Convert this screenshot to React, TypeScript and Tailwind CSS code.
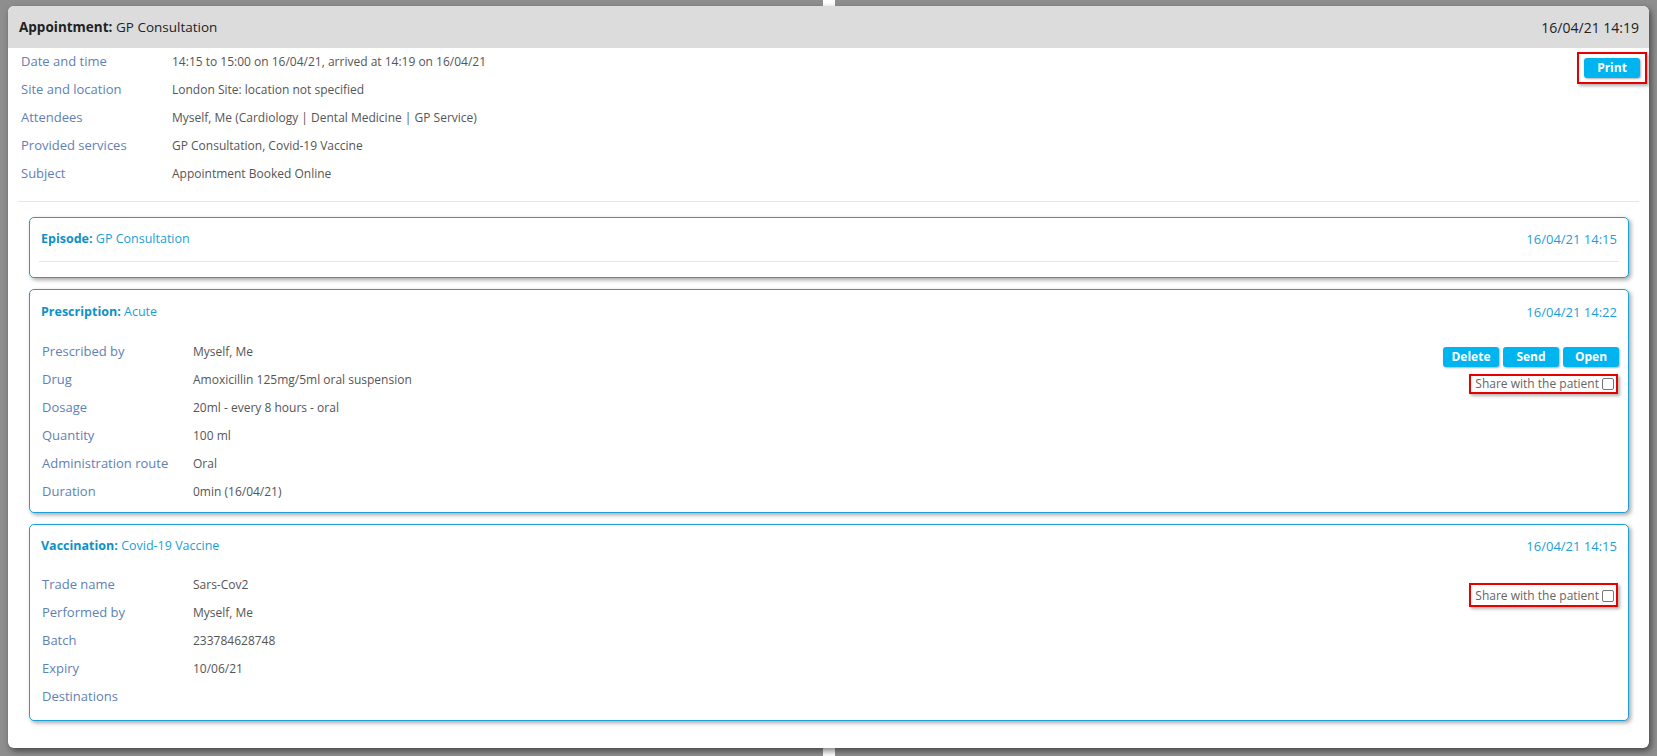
import type { ReactNode } from 'react';

type Row = { label: string; value?: string };

const appointmentRows: Row[] = [
  { label: 'Date and time', value: '14:15 to 15:00 on 16/04/21, arrived at 14:19 on 16/04/21' },
  { label: 'Site and location', value: 'London Site: location not specified' },
  { label: 'Attendees', value: 'Myself, Me (Cardiology | Dental Medicine | GP Service)' },
  { label: 'Provided services', value: 'GP Consultation, Covid-19 Vaccine' },
  { label: 'Subject', value: 'Appointment Booked Online' },
];

const prescriptionRows: Row[] = [
  { label: 'Prescribed by', value: 'Myself, Me' },
  { label: 'Drug', value: 'Amoxicillin 125mg/5ml oral suspension' },
  { label: 'Dosage', value: '20ml - every 8 hours - oral' },
  { label: 'Quantity', value: '100 ml' },
  { label: 'Administration route', value: 'Oral' },
  { label: 'Duration', value: '0min (16/04/21)' },
];

const vaccinationRows: Row[] = [
  { label: 'Trade name', value: 'Sars-Cov2' },
  { label: 'Performed by', value: 'Myself, Me' },
  { label: 'Batch', value: '233784628748' },
  { label: 'Expiry', value: '10/06/21' },
  { label: 'Destinations' },
];

function DetailRows({ rows }: { rows: Row[] }) {
  return (
    <div>
      {rows.map((row) => (
        <div key={row.label} className="flex h-[28px] items-center">
          <span className="w-[151px] shrink-0 text-[13px] text-[#5f7fb5]">{row.label}</span>
          <span className="text-[12px] text-[#555]">{row.value}</span>
        </div>
      ))}
    </div>
  );
}

function ActionButton({ children, className = '' }: { children: ReactNode; className?: string }) {
  return (
    <button
      className={`flex h-[20px] w-[56px] items-center justify-center rounded-[3px] bg-[#00b4ef] text-[12px] font-bold text-white shadow-[1px_1px_2px_rgba(0,0,0,0.3)] ${className}`}
    >
      {children}
    </button>
  );
}

function ShareToggle({ tall }: { tall?: boolean }) {
  return (
    <label
      className={`mr-[1px] flex items-center border-2 border-[#e60000] pl-[4px] pr-[2px] shadow-[2px_2px_3px_rgba(0,0,0,0.3)] ${tall ? 'h-[24px] pt-[2px]' : 'h-[20px]'}`}
    >
      <span className="text-[12px] text-[#666]">Share with the patient</span>
      <span className="ml-[3px] h-[12px] w-[12px] rounded-[2px] border border-[#777] bg-white" />
    </label>
  );
}

function Card({
  kind,
  title,
  date,
  titleHeight,
  children,
}: {
  kind: string;
  title: string;
  date: string;
  titleHeight: string;
  children: ReactNode;
}) {
  return (
    <div className="rounded-[5px] border border-[#1e9fd6] bg-white shadow-[2px_2px_4px_rgba(0,0,0,0.35)]">
      <div className={`flex items-center justify-between pl-[11px] pr-[11px] text-[12.5px] text-[#1a9fd9] ${titleHeight}`}>
        <span>
          <span className="font-bold text-[#0e90c8]">{kind}:</span> {title}
        </span>
        <span className="text-[13px]">{date}</span>
      </div>
      {children}
    </div>
  );
}

export default function App() {
  return (
    <div className="relative flex h-[756px] w-full overflow-hidden bg-[#8c8c8c] font-['Open_Sans',sans-serif]">
      <div className="flex-1 bg-[#8e8e8e]" />
      <div className="w-[12px] bg-white" />
      <div className="flex-1 bg-[#8e8e8e]" />

      {/* appointment dialog over the dimmed page */}
      <section className="absolute left-[8px] top-[6px] flex h-[742px] w-[1641px] flex-col overflow-hidden rounded-[6px] bg-white shadow-[2px_3px_6px_rgba(0,0,0,0.5)]">
        <header className="flex h-[42px] shrink-0 items-center justify-between bg-[#dcdcdc] pl-[11px] pr-[10px] text-[13.5px] text-[#222]">
          <span>
            <span className="font-bold">Appointment:</span> GP Consultation
          </span>
          <span className="text-[14px]">16/04/21 14:19</span>
        </header>

        <div className="flex justify-between">
          <div className="pl-[13px]">
            <DetailRows rows={appointmentRows} />
          </div>
          <div className="pr-[2px] pt-[4px]">
            <div className="border-2 border-[#e60000] px-[5px] py-[4px] shadow-[2px_2px_3px_rgba(0,0,0,0.3)]">
              <ActionButton className="h-[19px]">Print</ActionButton>
            </div>
          </div>
        </div>

        <div className="mx-[10px] mt-[13px] h-px bg-[#e6e6e6]" />

        <div className="flex flex-col gap-[11px] pl-[21px] pr-[20px] pt-[15px]">
          <Card kind="Episode" title="GP Consultation" date="16/04/21 14:15" titleHeight="h-[43px]">
            <div className="mx-[9px] h-px bg-[#e6e6e6]" />
            <div className="h-[15px]" />
          </Card>

          <Card kind="Prescription" title="Acute" date="16/04/21 14:22" titleHeight="h-[45px]">
            <div className="flex justify-between pb-[6px] pl-[12px] pr-[9px] pt-[3px]">
              <DetailRows rows={prescriptionRows} />
              <div className="flex flex-col items-end pt-[9px]">
                <div className="flex gap-[4px]">
                  <ActionButton>Delete</ActionButton>
                  <ActionButton>Send</ActionButton>
                  <ActionButton>Open</ActionButton>
                </div>
                <div className="mt-[7px]">
                  <ShareToggle />
                </div>
              </div>
            </div>
          </Card>

          <Card kind="Vaccination" title="Covid-19 Vaccine" date="16/04/21 14:15" titleHeight="h-[43px]">
            <div className="flex justify-between pb-[9px] pl-[12px] pr-[9px] pt-[3px]">
              <DetailRows rows={vaccinationRows} />
              <div className="pt-[12px]">
                <ShareToggle tall />
              </div>
            </div>
          </Card>
        </div>
      </section>
    </div>
  );
}
